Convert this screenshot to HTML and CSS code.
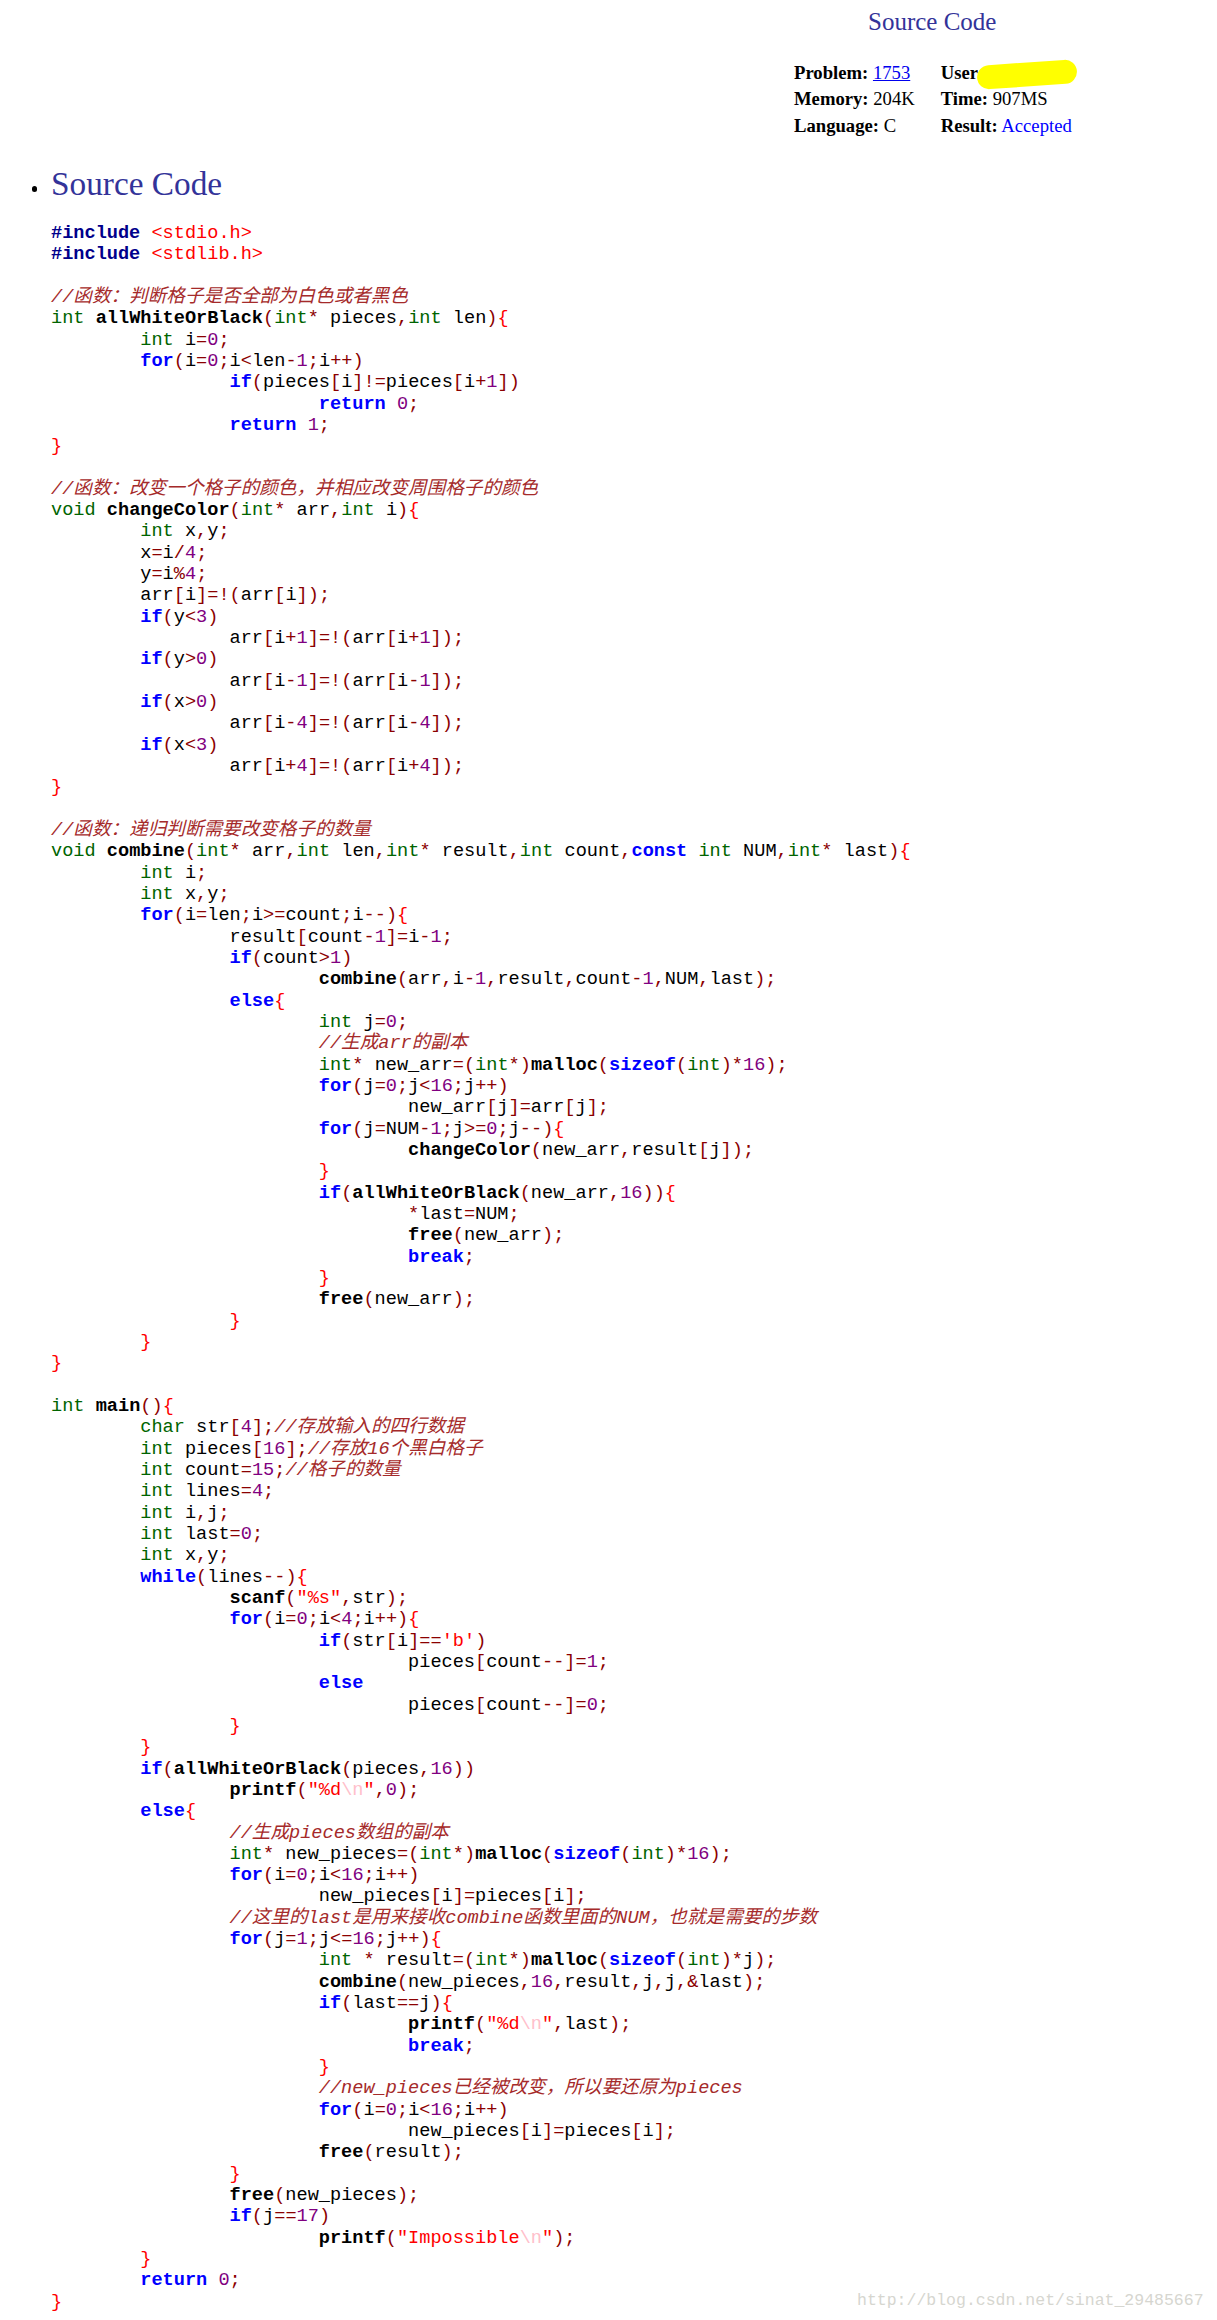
FILE: index.html
```html
<!DOCTYPE html>
<html lang="zh">
<head>
<meta charset="utf-8">
<title>Source Code</title>
<link rel="stylesheet" href="styles.css">
</head>
<body>
<div class="page">
  <p class="title">Source Code</p>
  <div class="info">
    <div class="cell"><b>Problem:</b> <a class="plink" href="#">1753</a></div>
    <div class="cell user"><b>User:</b>
      <svg class="blob" width="104" height="32" viewBox="0 0 104 32" aria-hidden="true"><rect x="1" y="3.5" width="100" height="24" rx="12" transform="rotate(-4 51 15.5)" fill="#ffff00"/></svg>
    </div>
    <div class="cell"><b>Memory:</b> 204K</div>
    <div class="cell"><b>Time:</b> 907MS</div>
    <div class="cell"><b>Language:</b> C</div>
    <div class="cell"><b>Result:</b> <span class="acc">Accepted</span></div>
  </div>
  <ul class="src">
    <li class="src-item">
      <div class="src-head">Source Code</div>
<pre class="code">#include &lt;stdio.h&gt;
#include &lt;stdlib.h&gt;

//函数：判断格子是否全部为白色或者黑色
int allWhiteOrBlack(int* pieces,int len){
&#9;int i=0;
&#9;for(i=0;i&lt;len-1;i++)
&#9;&#9;if(pieces[i]!=pieces[i+1])
&#9;&#9;&#9;return 0;
&#9;&#9;return 1;
}

//函数：改变一个格子的颜色，并相应改变周围格子的颜色
void changeColor(int* arr,int i){
&#9;int x,y;
&#9;x=i/4;
&#9;y=i%4;
&#9;arr[i]=!(arr[i]);
&#9;if(y&lt;3)
&#9;&#9;arr[i+1]=!(arr[i+1]);
&#9;if(y&gt;0)
&#9;&#9;arr[i-1]=!(arr[i-1]);
&#9;if(x&gt;0)
&#9;&#9;arr[i-4]=!(arr[i-4]);
&#9;if(x&lt;3)
&#9;&#9;arr[i+4]=!(arr[i+4]);
}

//函数：递归判断需要改变格子的数量
void combine(int* arr,int len,int* result,int count,const int NUM,int* last){
&#9;int i;
&#9;int x,y;
&#9;for(i=len;i&gt;=count;i--){
&#9;&#9;result[count-1]=i-1;
&#9;&#9;if(count&gt;1)
&#9;&#9;&#9;combine(arr,i-1,result,count-1,NUM,last);
&#9;&#9;else{
&#9;&#9;&#9;int j=0;
&#9;&#9;&#9;//生成arr的副本
&#9;&#9;&#9;int* new_arr=(int*)malloc(sizeof(int)*16);
&#9;&#9;&#9;for(j=0;j&lt;16;j++)
&#9;&#9;&#9;&#9;new_arr[j]=arr[j];
&#9;&#9;&#9;for(j=NUM-1;j&gt;=0;j--){
&#9;&#9;&#9;&#9;changeColor(new_arr,result[j]);
&#9;&#9;&#9;}
&#9;&#9;&#9;if(allWhiteOrBlack(new_arr,16)){
&#9;&#9;&#9;&#9;*last=NUM;
&#9;&#9;&#9;&#9;free(new_arr);
&#9;&#9;&#9;&#9;break;
&#9;&#9;&#9;}
&#9;&#9;&#9;free(new_arr);
&#9;&#9;}
&#9;}
}

int main(){
&#9;char str[4];//存放输入的四行数据
&#9;int pieces[16];//存放16个黑白格子
&#9;int count=15;//格子的数量
&#9;int lines=4;
&#9;int i,j;
&#9;int last=0;
&#9;int x,y;
&#9;while(lines--){
&#9;&#9;scanf("%s",str);
&#9;&#9;for(i=0;i&lt;4;i++){
&#9;&#9;&#9;if(str[i]=='b')
&#9;&#9;&#9;&#9;pieces[count--]=1;
&#9;&#9;&#9;else
&#9;&#9;&#9;&#9;pieces[count--]=0;
&#9;&#9;}
&#9;}
&#9;if(allWhiteOrBlack(pieces,16))
&#9;&#9;printf("%d\n",0);
&#9;else{
&#9;&#9;//生成pieces数组的副本
&#9;&#9;int* new_pieces=(int*)malloc(sizeof(int)*16);
&#9;&#9;for(i=0;i&lt;16;i++)
&#9;&#9;&#9;new_pieces[i]=pieces[i];
&#9;&#9;//这里的last是用来接收combine函数里面的NUM，也就是需要的步数
&#9;&#9;for(j=1;j&lt;=16;j++){
&#9;&#9;&#9;int * result=(int*)malloc(sizeof(int)*j);
&#9;&#9;&#9;combine(new_pieces,16,result,j,j,&amp;last);
&#9;&#9;&#9;if(last==j){
&#9;&#9;&#9;&#9;printf("%d\n",last);
&#9;&#9;&#9;&#9;break;
&#9;&#9;&#9;}
&#9;&#9;&#9;//new_pieces已经被改变，所以要还原为pieces
&#9;&#9;&#9;for(i=0;i&lt;16;i++)
&#9;&#9;&#9;&#9;new_pieces[i]=pieces[i];
&#9;&#9;&#9;free(result);
&#9;&#9;}
&#9;&#9;free(new_pieces);
&#9;&#9;if(j==17)
&#9;&#9;&#9;printf("Impossible\n");
&#9;}
&#9;return 0;
}</pre>
    </li>
  </ul>
  <div class="watermark">http://blog.csdn.net/sinat_29485667</div>
</div>
<script src="script.js"></script>
</body>
</html>
```

FILE: styles.css
```css
html, body {
  margin: 0;
  padding: 0;
  background: #ffffff;
}
body {
  font-family: "Liberation Serif", "Times New Roman", serif;
  color: #000000;
}
.page {
  position: relative;
  height: 2320px;
  overflow: hidden;
}
.title {
  margin: 0;
  padding: 6.5px 0 0 868px;
  font-size: 25px;
  line-height: 30px;
  color: #333399;
}
.info {
  margin: 23.2px 0 0 794px;
  display: grid;
  grid-template-columns: 146.7px auto;
  font-size: 18.67px;
  line-height: 26.67px;
  width: max-content;
}
.cell {
  white-space: nowrap;
}
.user {
  position: relative;
}
.blob {
  position: absolute;
  left: 35px;
  top: -1px;
  overflow: visible;
}
.plink {
  color: #0000ee;
  text-decoration: underline;
}
.acc {
  color: #0000ff;
}
.src {
  list-style: none;
  margin: 24.1px 0 0;
  padding: 0 0 0 51px;
}
.src-head {
  position: relative;
  font-size: 33.3px;
  line-height: 40px;
  color: #333399;
}
.src-head::before {
  content: "";
  position: absolute;
  left: -19.5px;
  top: 22.7px;
  width: 5.2px;
  height: 5.2px;
  border-radius: 50%;
  background: #000000;
}
.code {
  margin: 19.1px 0 0;
  font-family: "Liberation Mono", "Noto Sans CJK SC", monospace;
  font-size: 18.6px;
  line-height: 21.33px;
  tab-size: 8;
  -moz-tab-size: 8;
  color: #000000;
}
.code .k { color: #0000ff; font-weight: bold; }
.code .t { color: #006400; }
.code .s { color: #ff0000; }
.code .e { color: #ffc0cb; }
.code .c { color: #a52a2a; font-style: italic; }
.code .n { color: #800080; }
.code .p { color: #00008b; font-weight: bold; }
.code .y { color: #8b0000; }
.code .f { color: #000000; font-weight: bold; }
.code .b { color: #ff0000; }
.watermark {
  position: absolute;
  left: 857px;
  top: 2290.5px;
  font-family: "Liberation Mono", monospace;
  font-size: 16.5px;
  line-height: 20px;
  color: #d6d6d0;
  white-space: nowrap;
}
```

FILE: script.js
```js
(function () {
  var KW = { "for": 1, "if": 1, "else": 1, "return": 1, "while": 1, "break": 1, "const": 1, "sizeof": 1 };
  var TY = { "int": 1, "void": 1, "char": 1 };
  var pre = document.querySelector(".code");
  if (!pre) return;
  var lines = pre.textContent.split("\n");
  var frag = document.createDocumentFragment();
  function add(cls, text) {
    if (!cls) { frag.appendChild(document.createTextNode(text)); return; }
    var s = document.createElement("span");
    s.className = cls;
    s.textContent = text;
    frag.appendChild(s);
  }
  lines.forEach(function (line, idx) {
    var i = 0, m, inc = false;
    while (i < line.length) {
      var r = line.slice(i);
      if ((m = r.match(/^\/\/.*/))) {
        add("c", m[0]);
      } else if ((m = r.match(/^#include/))) {
        add("p", m[0]); inc = true;
      } else if (inc && (m = r.match(/^<[^>]*>/))) {
        add("s", m[0]);
      } else if ((m = r.match(/^("|')(?:[^"'\\]|\\.)*\1/))) {
        m[0].split(/(\\.)/).forEach(function (p) {
          if (!p) return;
          add(/^\\./.test(p) ? "e" : "s", p);
        });
      } else if ((m = r.match(/^[A-Za-z_]\w*/))) {
        var w = m[0];
        if (KW[w]) add("k", w);
        else if (TY[w]) add("t", w);
        else if (/^\s*\(/.test(r.slice(w.length))) add("f", w);
        else add("", w);
      } else if ((m = r.match(/^\d+/))) {
        add("n", m[0]);
      } else if ((m = r.match(/^[{}]/))) {
        add("b", m[0]);
      } else if ((m = r.match(/^[~!%^*()\-+=\[\]\\:;,.\/?&<>|]/))) {
        add("y", m[0]);
      } else if ((m = r.match(/^\s+/))) {
        add("", m[0]);
      } else {
        m = [r.charAt(0)];
        add("", m[0]);
      }
      i += m[0].length;
    }
    if (idx < lines.length - 1) add("", "\n");
  });
  pre.textContent = "";
  pre.appendChild(frag);
})();
```
